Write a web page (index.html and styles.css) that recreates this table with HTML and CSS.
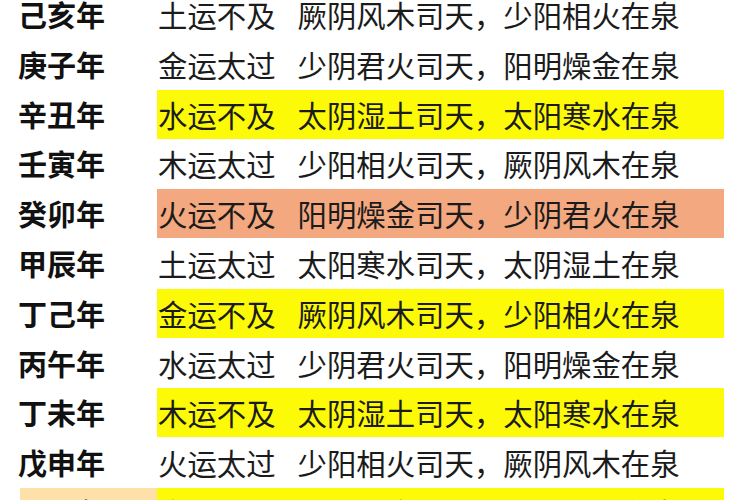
FILE: index.html
```html
<!DOCTYPE html>
<html lang="zh">
<head>
<meta charset="utf-8">
<link rel="stylesheet" href="styles.css">
</head>
<body>
<div class="table">
  <div class="row"><div class="year">己亥年</div><div class="cell"><span class="yun">土运不及</span><span class="qi">厥阴风木司天，少阳相火在泉</span></div></div>
  <div class="row"><div class="year">庚子年</div><div class="cell"><span class="yun">金运太过</span><span class="qi">少阴君火司天，阳明燥金在泉</span></div></div>
  <div class="row"><div class="year">辛丑年</div><div class="cell yellow"><span class="yun">水运不及</span><span class="qi">太阴湿土司天，太阳寒水在泉</span></div></div>
  <div class="row"><div class="year">壬寅年</div><div class="cell"><span class="yun">木运太过</span><span class="qi">少阳相火司天，厥阴风木在泉</span></div></div>
  <div class="row"><div class="year">癸卯年</div><div class="cell salmon"><span class="yun">火运不及</span><span class="qi">阳明燥金司天，少阴君火在泉</span></div></div>
  <div class="row"><div class="year">甲辰年</div><div class="cell"><span class="yun">土运太过</span><span class="qi">太阳寒水司天，太阴湿土在泉</span></div></div>
  <div class="row"><div class="year">丁己年</div><div class="cell yellow"><span class="yun">金运不及</span><span class="qi">厥阴风木司天，少阳相火在泉</span></div></div>
  <div class="row"><div class="year">丙午年</div><div class="cell"><span class="yun">水运太过</span><span class="qi">少阴君火司天，阳明燥金在泉</span></div></div>
  <div class="row"><div class="year">丁未年</div><div class="cell yellow"><span class="yun">木运不及</span><span class="qi">太阴湿土司天，太阳寒水在泉</span></div></div>
  <div class="row"><div class="year">戊申年</div><div class="cell"><span class="yun">火运太过</span><span class="qi">少阳相火司天，厥阴风木在泉</span></div></div>
  <div class="row"><div class="year peach">己酉年</div><div class="cell yellow"><span class="yun">金运不及</span><span class="qi">阳明燥金司天，少阴君火在泉</span></div></div>
</div>
</body>
</html>
```
FILE: styles.css
```css
html, body {
  margin: 0;
  padding: 0;
  overflow: hidden;
  background: #ffffff;
}
body {
  width: 750px;
  height: 500px;
  font-family: "Noto Sans CJK SC", "Noto Sans", sans-serif;
  color: #1b1b1b;
}
.table {
  margin-top: -10px;
  margin-left: 18px;
  display: flex;
  flex-direction: column;
}
.row {
  display: grid;
  grid-template-columns: 139px 567px;
  height: 49.8px;
}
.year {
  font-size: 29px;
  font-weight: 700;
  line-height: 49px;
  color: #111111;
  white-space: nowrap;
}
.cell {
  display: flex;
  align-items: center;
  font-size: 29.4px;
  line-height: 49px;
  height: 49px;
  white-space: nowrap;
  padding-left: 1px;
}
.qi {
  margin-left: 22px;
}
.yellow {
  background: #fdfa07;
}
.salmon {
  background: #f3a880;
}
.peach {
  background: #fde1a8;
  margin-left: 2px;
}
```
